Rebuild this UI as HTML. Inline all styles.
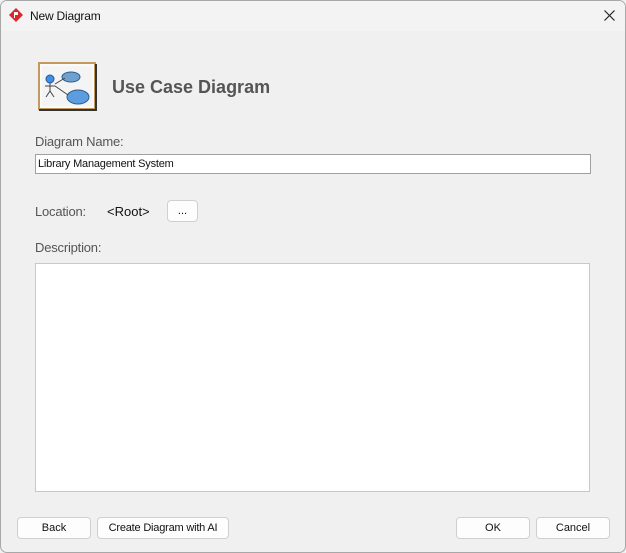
<!DOCTYPE html>
<html><head><style>
body{margin:0;width:626px;height:553px;overflow:hidden;background:#f0f0f0;font-family:"Liberation Sans",sans-serif;position:relative}
.win{position:absolute;left:0;top:0;width:624px;height:551px;border:1px solid #a8a8a8;border-radius:7px;background:#f0f0f0;overflow:hidden}
.title{position:absolute;left:0;top:0;width:624px;height:30px;background:#f3f3f3}
.abs{position:absolute}
.btn{position:absolute;height:20px;background:#fdfdfd;border:1px solid #d0d0d0;border-radius:4px;font-size:11px;text-align:center;line-height:20px;color:#111}
.lbl{position:absolute;font-size:13px;color:#555;letter-spacing:-0.2px}
</style></head><body>
<div class="win">
<div class="title">
<svg class="abs" style="left:8px;top:7px" width="14" height="14" viewBox="0 0 14 14"><path d="M7 0L14 7L7 14L0 7Z" fill="#d8282d"/><path d="M5 4h4v3h-3v3h-1z" fill="#fff"/></svg>
<div class="abs" style="left:29px;top:8px;font-size:12px;color:#111;letter-spacing:-0.2px">New Diagram</div>
<svg class="abs" style="left:603px;top:9px" width="11" height="11"><path d="M0.5 0.5L10.5 10.5M10.5 0.5L0.5 10.5" stroke="#222" stroke-width="1.2"/></svg>
</div>
<svg class="abs" style="left:37px;top:61px" width="60" height="50" viewBox="0 0 60 50">
<rect x="1" y="1" width="56" height="46" fill="#f4f4f4" stroke="#c39a5e" stroke-width="2"/>
<rect x="3" y="3" width="52" height="42" fill="none" stroke="#fff" stroke-width="1"/>
<rect x="1" y="47" width="58" height="2" fill="#333"/>
<rect x="57" y="2" width="2" height="47" fill="#333"/>
<ellipse cx="33" cy="15" rx="9" ry="5" fill="#6fa1cf" stroke="#2d5d8f"/>
<ellipse cx="40" cy="35" rx="11" ry="7" fill="#5c9de0" stroke="#2d5d8f"/>
<circle cx="12" cy="17" r="4" fill="#3f8fe6" stroke="#24579b"/>
<path d="M12 21v8M7 24h10M12 29l-4 6M12 29l4 6M17 22l10-6M17 24l13 9" stroke="#444" fill="none"/>
</svg>
<div class="abs" style="left:111px;top:76px;font-size:18px;font-weight:bold;color:#555">Use Case Diagram</div>
<div class="lbl" style="left:34px;top:133px">Diagram Name:</div>
<div class="abs" style="left:34px;top:153px;background:#fff;border:1px solid #a0a0a0;font-size:11px;line-height:18px;padding-left:2px;box-sizing:border-box;width:556px;height:20px;color:#111;letter-spacing:-0.2px">Library Management System</div>
<div class="lbl" style="left:34px;top:203px">Location:</div>
<div class="abs" style="left:106px;top:203px;font-size:13px;color:#111">&lt;Root&gt;</div>
<div class="btn" style="left:166px;top:199px;width:29px">...</div>
<div class="lbl" style="left:34px;top:239px">Description:</div>
<div class="abs" style="left:34px;top:262px;width:553px;height:227px;background:#fff;border:1px solid #c8c8c8"></div>
<div class="btn" style="left:16px;top:516px;width:72px">Back</div>
<div class="btn" style="left:96px;top:516px;width:130px;letter-spacing:-0.2px">Create Diagram with AI</div>
<div class="btn" style="left:455px;top:516px;width:72px">OK</div>
<div class="btn" style="left:535px;top:516px;width:72px">Cancel</div>
</div>
</body></html>
